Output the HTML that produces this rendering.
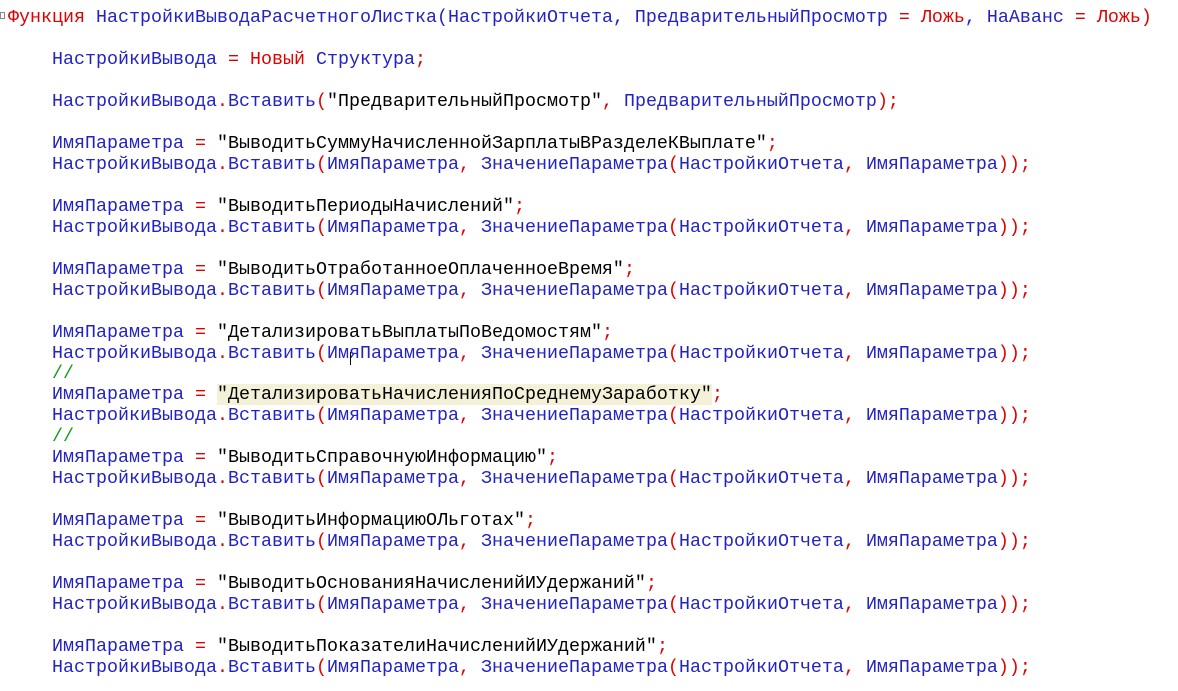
<!DOCTYPE html>
<html><head><meta charset="utf-8"><style>
body{margin:0;background:#fff;width:1178px;height:691px;overflow:hidden;position:relative}
pre{margin:0;position:absolute;left:8px;top:8px;font-family:"Liberation Mono","DejaVu Sans Mono",monospace;font-size:18.33px;line-height:20.97px;color:#000;letter-spacing:0}
.b{color:#2323c4}.r{color:#e00000}.g{color:#1a9a1a}.k{color:#000}
.hl{background:#f5f1d9}
.mk{position:absolute;left:0;top:12px;width:5px;height:7px;border:1px solid #888;box-sizing:border-box}
.cur{position:absolute;left:350px;top:352px;width:1px;height:13px;background:#000}
</style></head><body>
<div class="mk"></div>
<pre><span class="r">Функция</span> <span class="b">НастройкиВыводаРасчетногоЛистка(НастройкиОтчета, ПредварительныйПросмотр</span> <span class="r">=</span> <span class="r">Ложь</span><span class="b">,</span> <span class="b">НаАванс</span> <span class="r">=</span> <span class="r">Ложь)</span>

    <span class="b">НастройкиВывода</span> <span class="r">=</span> <span class="r">Новый</span> <span class="b">Структура</span><span class="r">;</span>

    <span class="b">НастройкиВывода</span><span class="r">.</span><span class="b">Вставить</span><span class="r">(</span>"ПредварительныйПросмотр"<span class="r">,</span> <span class="b">ПредварительныйПросмотр</span><span class="r">);</span>

    <span class="b">ИмяПараметра</span> <span class="r">=</span> "ВыводитьСуммуНачисленнойЗарплатыВРазделеКВыплате"<span class="r">;</span>
    <span class="b">НастройкиВывода</span><span class="r">.</span><span class="b">Вставить</span><span class="r">(</span><span class="b">ИмяПараметра</span><span class="r">,</span> <span class="b">ЗначениеПараметра</span><span class="r">(</span><span class="b">НастройкиОтчета</span><span class="r">,</span> <span class="b">ИмяПараметра</span><span class="r">));</span>

    <span class="b">ИмяПараметра</span> <span class="r">=</span> "ВыводитьПериодыНачислений"<span class="r">;</span>
    <span class="b">НастройкиВывода</span><span class="r">.</span><span class="b">Вставить</span><span class="r">(</span><span class="b">ИмяПараметра</span><span class="r">,</span> <span class="b">ЗначениеПараметра</span><span class="r">(</span><span class="b">НастройкиОтчета</span><span class="r">,</span> <span class="b">ИмяПараметра</span><span class="r">));</span>

    <span class="b">ИмяПараметра</span> <span class="r">=</span> "ВыводитьОтработанноеОплаченноеВремя"<span class="r">;</span>
    <span class="b">НастройкиВывода</span><span class="r">.</span><span class="b">Вставить</span><span class="r">(</span><span class="b">ИмяПараметра</span><span class="r">,</span> <span class="b">ЗначениеПараметра</span><span class="r">(</span><span class="b">НастройкиОтчета</span><span class="r">,</span> <span class="b">ИмяПараметра</span><span class="r">));</span>

    <span class="b">ИмяПараметра</span> <span class="r">=</span> "ДетализироватьВыплатыПоВедомостям"<span class="r">;</span>
    <span class="b">НастройкиВывода</span><span class="r">.</span><span class="b">Вставить</span><span class="r">(</span><span class="b">ИмяПараметра</span><span class="r">,</span> <span class="b">ЗначениеПараметра</span><span class="r">(</span><span class="b">НастройкиОтчета</span><span class="r">,</span> <span class="b">ИмяПараметра</span><span class="r">));</span>
    <span class="g">//</span>
    <span class="b">ИмяПараметра</span> <span class="r">=</span> <span class="hl">"ДетализироватьНачисленияПоСреднемуЗаработку"</span><span class="r">;</span>
    <span class="b">НастройкиВывода</span><span class="r">.</span><span class="b">Вставить</span><span class="r">(</span><span class="b">ИмяПараметра</span><span class="r">,</span> <span class="b">ЗначениеПараметра</span><span class="r">(</span><span class="b">НастройкиОтчета</span><span class="r">,</span> <span class="b">ИмяПараметра</span><span class="r">));</span>
    <span class="g">//</span>
    <span class="b">ИмяПараметра</span> <span class="r">=</span> "ВыводитьСправочнуюИнформацию"<span class="r">;</span>
    <span class="b">НастройкиВывода</span><span class="r">.</span><span class="b">Вставить</span><span class="r">(</span><span class="b">ИмяПараметра</span><span class="r">,</span> <span class="b">ЗначениеПараметра</span><span class="r">(</span><span class="b">НастройкиОтчета</span><span class="r">,</span> <span class="b">ИмяПараметра</span><span class="r">));</span>

    <span class="b">ИмяПараметра</span> <span class="r">=</span> "ВыводитьИнформациюОЛьготах"<span class="r">;</span>
    <span class="b">НастройкиВывода</span><span class="r">.</span><span class="b">Вставить</span><span class="r">(</span><span class="b">ИмяПараметра</span><span class="r">,</span> <span class="b">ЗначениеПараметра</span><span class="r">(</span><span class="b">НастройкиОтчета</span><span class="r">,</span> <span class="b">ИмяПараметра</span><span class="r">));</span>

    <span class="b">ИмяПараметра</span> <span class="r">=</span> "ВыводитьОснованияНачисленийИУдержаний"<span class="r">;</span>
    <span class="b">НастройкиВывода</span><span class="r">.</span><span class="b">Вставить</span><span class="r">(</span><span class="b">ИмяПараметра</span><span class="r">,</span> <span class="b">ЗначениеПараметра</span><span class="r">(</span><span class="b">НастройкиОтчета</span><span class="r">,</span> <span class="b">ИмяПараметра</span><span class="r">));</span>

    <span class="b">ИмяПараметра</span> <span class="r">=</span> "ВыводитьПоказателиНачисленийИУдержаний"<span class="r">;</span>
    <span class="b">НастройкиВывода</span><span class="r">.</span><span class="b">Вставить</span><span class="r">(</span><span class="b">ИмяПараметра</span><span class="r">,</span> <span class="b">ЗначениеПараметра</span><span class="r">(</span><span class="b">НастройкиОтчета</span><span class="r">,</span> <span class="b">ИмяПараметра</span><span class="r">));</span>
</pre>
<div class="cur"></div>
</body></html>
